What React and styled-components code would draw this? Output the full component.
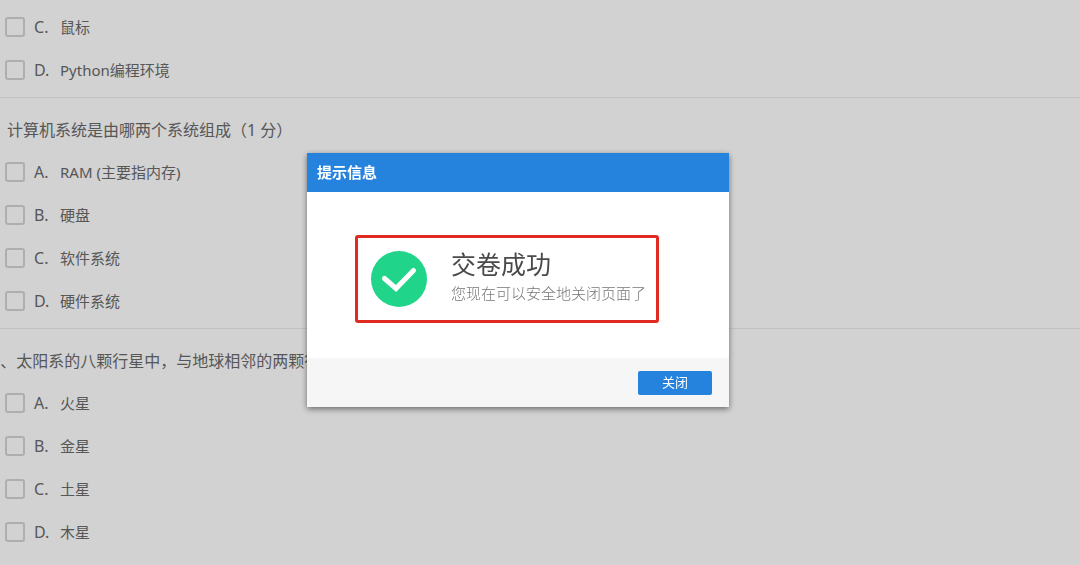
import React, { useState } from "react";
import styled, { createGlobalStyle } from "styled-components";

const questions = [
  {
    id: "q8",
    options: [
      { letter: "C", text: "鼠标" },
      { letter: "D", text: "Python编程环境" },
    ],
  },
  {
    id: "q9",
    title: "计算机系统是由哪两个系统组成（1 分）",
    options: [
      { letter: "A", text: "RAM (主要指内存)" },
      { letter: "B", text: "硬盘" },
      { letter: "C", text: "软件系统" },
      { letter: "D", text: "硬件系统" },
    ],
  },
  {
    id: "q10",
    number: "10、",
    title: "太阳系的八颗行星中，与地球相邻的两颗行星是",
    options: [
      { letter: "A", text: "火星" },
      { letter: "B", text: "金星" },
      { letter: "C", text: "土星" },
      { letter: "D", text: "木星" },
    ],
  },
];

const Question = ({ question }) => (
  <QuestionBlock>
    {question.title && (
      <QuestionTitle $numbered={Boolean(question.number)}>
        {question.number}
        {question.title}
      </QuestionTitle>
    )}
    {question.options.map(({ letter, text }) => (
      <Option key={letter}>
        <Checkbox type="checkbox" name={question.id} value={letter} />
        <Letter>{letter}.</Letter>
        <span>{text}</span>
      </Option>
    ))}
  </QuestionBlock>
);

const SuccessIcon = () => (
  <Icon viewBox="0 0 56 56" aria-hidden="true">
    <circle cx="28" cy="28" r="28" fill="#20d48a" />
    <path
      d="M13.5 27.5 L25 37.5 L42.5 19.5"
      fill="none"
      stroke="#fff"
      strokeWidth="5"
      strokeLinecap="round"
    />
  </Icon>
);

const App = () => {
  const [open, setOpen] = useState(true);

  return (
    <>
      <GlobalStyle />
      <Paper>
        {questions.map((question) => (
          <Question key={question.id} question={question} />
        ))}
      </Paper>
      {open && (
        <Overlay>
          <Dialog role="dialog" aria-labelledby="dialog-title">
            <DialogHeader id="dialog-title">提示信息</DialogHeader>
            <DialogBody>
              <Result>
                <SuccessIcon />
                <ResultMessage>
                  <ResultTitle>交卷成功</ResultTitle>
                  <ResultText>您现在可以安全地关闭页面了</ResultText>
                </ResultMessage>
              </Result>
            </DialogBody>
            <DialogFooter>
              <CloseButton type="button" onClick={() => setOpen(false)}>
                关闭
              </CloseButton>
            </DialogFooter>
          </Dialog>
        </Overlay>
      )}
    </>
  );
};

export default App;

const GlobalStyle = createGlobalStyle`
  * {
    box-sizing: border-box;
    margin: 0;
    padding: 0;
  }

  body {
    background: #fff;
    color: #6a6a6a;
    font-family: "Noto Sans", "Noto Sans CJK SC", sans-serif;
    overflow: hidden;
  }

  button, input {
    font-family: inherit;
  }
`;

const Paper = styled.main`
  padding-top: 6px;
`;

const QuestionBlock = styled.section`
  padding-bottom: 5px;

  & + & {
    border-top: 1px solid #ececec;
  }
`;

const QuestionTitle = styled.h2`
  margin-left: ${({ $numbered }) => ($numbered ? "-18px" : "7px")};
  padding-top: 12px;
  font-size: 16px;
  font-weight: 400;
  line-height: 41px;
  white-space: nowrap;
`;

const Option = styled.label`
  display: flex;
  align-items: center;
  height: 43px;
  padding: 0 0 2px 5px;
  font-size: 15px;
`;

const Checkbox = styled.input`
  appearance: none;
  width: 20px;
  height: 20px;
  margin-right: 9px;
  border: 2px solid #d4d4d4;
  border-radius: 3px;

  &:checked {
    background: #2583de;
  }
`;

const Letter = styled.span`
  width: 26px;
  font-size: 16px;
`;

const Overlay = styled.div`
  position: fixed;
  inset: 0;
  display: flex;
  align-items: center;
  justify-content: center;
  padding: 0 44px 5px 0;
  background: rgba(0, 0, 0, 0.175);
`;

const Dialog = styled.div`
  width: 422px;
  background: #fff;
  box-shadow: 0 2px 6px rgba(0, 0, 0, 0.5);
`;

const DialogHeader = styled.h1`
  padding-left: 10px;
  background: #2583de;
  color: #fff;
  font-size: 15px;
  font-weight: 700;
  line-height: 39px;
`;

const DialogBody = styled.div`
  padding: 43px 70px 35px 48px;
`;

const Result = styled.div`
  display: flex;
  align-items: center;
  gap: 24px;
  height: 88px;
  padding-left: 13px;
  border: 3px solid #e02a22;
  border-radius: 3px;
  white-space: nowrap;
`;

const Icon = styled.svg`
  flex: none;
  width: 56px;
  height: 56px;
`;

const ResultMessage = styled.div`
  padding-bottom: 6px;
`;

const ResultTitle = styled.h2`
  color: #4a4a4a;
  font-size: 25px;
  font-weight: 400;
  line-height: 34px;
`;

const ResultText = styled.p`
  color: #777;
  font-size: 15px;
  font-weight: 300;
  line-height: 24px;
`;

const DialogFooter = styled.div`
  display: flex;
  align-items: center;
  justify-content: flex-end;
  height: 49px;
  padding-right: 17px;
  background: #f6f6f6;
`;

const CloseButton = styled.button`
  width: 74px;
  height: 24px;
  padding-bottom: 2px;
  border: none;
  border-radius: 2px;
  background: #2583de;
  color: #fff;
  font-size: 13px;
  cursor: pointer;
`;
